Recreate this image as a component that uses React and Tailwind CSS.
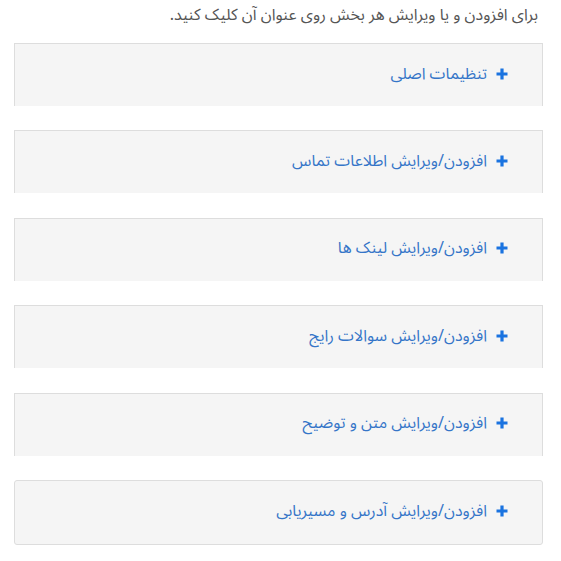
const SECTIONS = [
  'تنظیمات اصلی',
  'افزودن/ویرایش اطلاعات تماس',
  'افزودن/ویرایش لینک ها',
  'افزودن/ویرایش سوالات رایج',
  'افزودن/ویرایش متن و توضیح',
  'افزودن/ویرایش آدرس و مسیریابی',
];

function Plus() {
  return (
    <svg viewBox="0 0 12 12" className="h-[12px] w-[12px] shrink-0">
      <path d="M4.4 0.5h3.2v3.9h3.9v3.2H7.6v3.9H4.4V7.6H0.5V4.4h3.9z" fill="#1a73e0" />
    </svg>
  );
}

export default function App() {
  return (
    <div
      dir="rtl"
      className="min-h-[561px] bg-white px-[18px]"
      style={{ fontFamily: '"Noto Sans Arabic", "DejaVu Sans", sans-serif' }}
    >
      <p className="pr-[5px] pt-[2px] text-[16px] leading-[26px] text-[#555]">
        برای افزودن و یا ویرایش هر بخش روی عنوان آن کلیک کنید.
      </p>
      <div className="mt-[15px] flex w-[529px] flex-col gap-[24.4px]">
        {SECTIONS.map((s, i) => (
          <div
            key={s}
            className={`flex items-center gap-[9px] border border-[#ddd] bg-[#f5f5f5] pb-[3px] pr-[34px] ${
              i === SECTIONS.length - 1 ? 'h-[65px] rounded-[3px]' : 'h-[63px] border-b-0'
            }`}
          >
            <Plus />
            <span className="text-[16px] text-[#3575c8]">{s}</span>
          </div>
        ))}
      </div>
    </div>
  );
}
